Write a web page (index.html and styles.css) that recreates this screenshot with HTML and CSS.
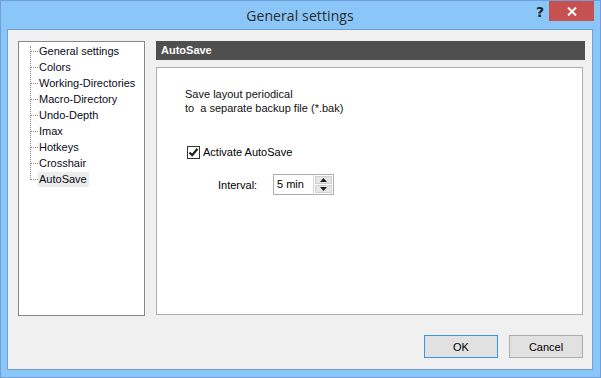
FILE: index.html
```html
<!DOCTYPE html>
<html>
<head>
<meta charset="utf-8">
<link rel="stylesheet" href="styles.css">
</head>
<body>
<div class="window">
  <div class="titlebar">
    <div class="title">General settings</div>
    <div class="help">?</div>
    <div class="close">
      <svg width="10" height="9" viewBox="0 0 10 9"><path d="M1 0.5 L9 8.5 M9 0.5 L1 8.5" stroke="#fff" stroke-width="2"/></svg>
    </div>
  </div>
  <div class="client">
    <div class="main">
      <div class="tree">
        <ul class="tree-list">
          <li>General settings</li>
          <li>Colors</li>
          <li>Working-Directories</li>
          <li>Macro-Directory</li>
          <li>Undo-Depth</li>
          <li>Imax</li>
          <li>Hotkeys</li>
          <li>Crosshair</li>
          <li class="selected"><span>AutoSave</span></li>
        </ul>
      </div>
      <div class="panel">
        <div class="panel-header">AutoSave</div>
        <div class="panel-body">
          <p class="desc">Save layout periodical<br>to&nbsp; a separate backup file (*.bak)</p>
          <label class="check-row">
            <span class="checkbox">
              <svg width="11" height="11" viewBox="0 0 11 11"><path d="M1.5 5.5 L4.2 8.2 L9.5 1.8" fill="none" stroke="#1e1e1e" stroke-width="2.2"/></svg>
            </span>
            Activate AutoSave
          </label>
          <div class="interval-row">
            <span class="interval-label">Interval:</span>
            <div class="spin">
              <div class="spin-edit">5 min</div>
              <div class="spin-btns">
                <div class="spin-btn"><svg width="7" height="4" viewBox="0 0 7 4"><path d="M3.5 0 L7 4 L0 4 Z" fill="#222"/></svg></div>
                <div class="spin-btn"><svg width="7" height="4" viewBox="0 0 7 4"><path d="M0 0 L7 0 L3.5 4 Z" fill="#222"/></svg></div>
              </div>
            </div>
          </div>
        </div>
      </div>
    </div>
    <div class="buttons">
      <button class="btn default">OK</button>
      <button class="btn">Cancel</button>
    </div>
  </div>
</div>
</body>
</html>
```
FILE: styles.css
```css
html, body {
  margin: 0;
  padding: 0;
  width: 601px;
  height: 378px;
  overflow: hidden;
}
body {
  font-family: "Liberation Sans", Arial, sans-serif;
  font-size: 11px;
  color: #000;
}
.window {
  box-sizing: border-box;
  width: 601px;
  height: 378px;
  border: 1px solid #6f9fd6;
  background: #8ac6f8;
  padding: 0 7px 7px 6px;
  display: flex;
  flex-direction: column;
}
.titlebar {
  height: 28px;
  flex: none;
  position: relative;
  display: flex;
  justify-content: center;
}
.title {
  font-family: "Open Sans", "Noto Sans", sans-serif;
  font-size: 14px;
  color: #2b2b2b;
  line-height: 30px;
  letter-spacing: 0.1px;
}
.help {
  position: absolute;
  right: 49px;
  top: 3px;
  font-family: "DejaVu Sans", sans-serif;
  font-weight: bold;
  font-size: 14px;
  color: #222;
}
.close {
  position: absolute;
  right: -1px;
  top: 0;
  width: 45px;
  height: 20px;
  background: #c75050;
  display: flex;
  align-items: center;
  justify-content: center;
}
.client {
  flex: 1;
  border: 1px solid #6f9fd6;
  background: #f0f0f0;
  display: flex;
  flex-direction: column;
}
.main {
  display: flex;
  padding: 11px 9px 0 10px;
  gap: 11px;
}
.tree {
  box-sizing: border-box;
  width: 127px;
  height: 275px;
  border: 1px solid #828790;
  background: #fff;
  padding: 1px 0 0 11px;
  color: #0a0a1a;
}
.tree-list {
  list-style: none;
  margin: 0;
  padding: 0;
  position: relative;
}
.tree-list::before {
  content: "";
  position: absolute;
  left: 0;
  top: 3px;
  height: 134px;
  border-left: 1px dotted #8a8a8a;
}
.tree-list li {
  height: 16px;
  display: flex;
  align-items: center;
  white-space: nowrap;
}
.tree-list li::before {
  content: "";
  width: 7px;
  margin-left: 1px;
  border-top: 1px dotted #8a8a8a;
  margin-right: 1px;
  flex: none;
}
.tree-list li.selected span {
  background: #ececec;
  padding: 1px 2px 2px 1px;
  margin-left: -1px;
}
.panel {
  flex: 1;
  display: flex;
  flex-direction: column;
  height: 274px;
}
.panel-header {
  height: 19px;
  background: #4f4f4f;
  color: #fff;
  font-weight: bold;
  line-height: 19px;
  padding-left: 5px;
  margin-right: -2px;
}
.panel-body {
  flex: 1;
  margin-top: 7px;
  border: 1px solid #adadad;
  background: #fff;
  padding: 19px 0 0 28px;
}
.desc {
  margin: 0;
  line-height: 14px;
  color: #111;
}
.check-row {
  display: flex;
  align-items: center;
  margin-top: 30px;
  margin-left: 2px;
  gap: 3px;
  height: 14px;
}
.checkbox {
  box-sizing: border-box;
  width: 13px;
  height: 13px;
  border: 1px solid #333;
  background: #fff;
  display: flex;
  align-items: center;
  justify-content: center;
}
.interval-row {
  display: flex;
  align-items: center;
  margin-top: 15px;
  margin-left: 33px;
}
.interval-label {
  width: 55px;
}
.spin {
  display: flex;
  height: 21px;
}
.spin-edit {
  box-sizing: border-box;
  width: 41px;
  height: 21px;
  border: 1px solid #abadb3;
  border-right: 1px solid #c5d9ef;
  background: #fff;
  line-height: 19px;
  padding-left: 3px;
}
.spin-btns {
  box-sizing: border-box;
  width: 20px;
  height: 21px;
  border: 1px solid #abadb3;
  border-left: none;
  display: flex;
  flex-direction: column;
  padding: 1px;
  gap: 1px;
  background: #fff;
}
.spin-btn {
  flex: 1;
  background: #e6e6e6;
  border: 1px solid #d0d0d0;
  display: flex;
  align-items: center;
  justify-content: center;
}
.buttons {
  display: flex;
  justify-content: flex-end;
  gap: 11px;
  padding: 19px 9px 0 0;
}
.btn {
  box-sizing: border-box;
  width: 74px;
  height: 23px;
  background: #e1e1e1;
  border: 1px solid #adadad;
  font-family: "Liberation Sans", Arial, sans-serif;
  font-size: 11px;
  color: #000;
  padding: 0;
}
.btn.default {
  border: 1px solid #3c94e6;
}
```
